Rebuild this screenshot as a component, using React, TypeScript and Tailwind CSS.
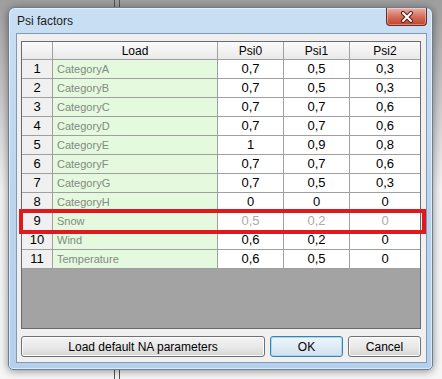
import React from 'react';

type Row = { name: string; v: [string, string, string]; dim?: boolean };

const rows: Row[] = [
  { name: 'CategoryA', v: ['0,7', '0,5', '0,3'] },
  { name: 'CategoryB', v: ['0,7', '0,5', '0,3'] },
  { name: 'CategoryC', v: ['0,7', '0,7', '0,6'] },
  { name: 'CategoryD', v: ['0,7', '0,7', '0,6'] },
  { name: 'CategoryE', v: ['1', '0,9', '0,8'] },
  { name: 'CategoryF', v: ['0,7', '0,7', '0,6'] },
  { name: 'CategoryG', v: ['0,7', '0,5', '0,3'] },
  { name: 'CategoryH', v: ['0', '0', '0'] },
  { name: 'Snow', v: ['0,5', '0,2', '0'], dim: true },
  { name: 'Wind', v: ['0,6', '0,2', '0'] },
  { name: 'Temperature', v: ['0,6', '0,5', '0'] },
];

const headCell =
  'h-[18px] border-r border-b border-[#a0a0a0] bg-gradient-to-b from-[#fbfbfb] to-[#e9e9e9] flex items-center justify-center';

function CloseButton() {
  return (
    <div className="absolute top-0 right-[5px] w-[41px] h-[18px] rounded-b-[4px] border border-t-0 border-[#6e2b22] bg-gradient-to-b from-[#eab1a5] via-[#d2705d] to-[#c2412a] flex items-center justify-center shadow-[inset_0_0_0_1px_rgba(255,255,255,0.35)]">
      <svg width="14" height="12" viewBox="0 0 14 12">
        <path d="M3 2 L11 10 M11 2 L3 10" stroke="#5a1f18" strokeWidth="4" strokeLinecap="round" />
        <path d="M3 2 L11 10 M11 2 L3 10" stroke="#ffffff" strokeWidth="2" strokeLinecap="round" />
      </svg>
    </div>
  );
}

function VistaButton({ label, width, primary }: { label: string; width: string; primary?: boolean }) {
  return (
    <div
      className={`${width} h-[21px] rounded-[3px] border flex items-center justify-center text-[12px] text-black ${
        primary
          ? 'border-[#3c7fb1] bg-gradient-to-b from-[#eef5fa] via-[#e0ecf4] to-[#cfe0ec] shadow-[inset_0_0_0_1px_#a9d8f2]'
          : 'border-[#707070] bg-gradient-to-b from-[#f3f3f3] via-[#e9e9e9] to-[#d6d6d6] shadow-[inset_0_0_0_1px_#fcfcfc]'
      }`}
    >
      {label}
    </div>
  );
}

export default function App() {
  return (
    <div
      className="relative w-[442px] h-[379px] overflow-hidden bg-gradient-to-b from-[#9e9e9e] via-[#f4f4f4] to-[#f6f6f6] pt-[7px] pl-[8px]"
      style={{ fontFamily: '"Liberation Sans", Arial, sans-serif' }}
    >
      {/* window behind the dialog */}
      <div className="absolute left-[114px] top-0 w-[6px] h-[379px] border-x border-[#555]" />

      <div className="relative w-[425px] h-[363px] rounded-t-[7px] rounded-b-[5px] border border-[#6a7f95] bg-gradient-to-b from-[#c9dff4] via-[#bcd5ee] to-[#b4d0ec] shadow-[0_1px_8px_rgba(0,0,0,0.45),inset_0_0_0_1px_rgba(255,255,255,0.55)] flex flex-col">
        <div className="h-[25px] pl-[8px] flex items-center text-[12px] text-[#1c1c1c]">Psi factors</div>
        <CloseButton />

        <div className="ml-[7px] mr-[5px] mb-[6px] flex-1 border border-[#8299b2] bg-[#f0f0f0] pl-[4px] pt-[7px] flex flex-col">
          <div className="relative w-[400px] h-[288px] border border-[#6a6a6a] bg-[#a3a3a3]">
            <div className="grid grid-cols-[31px_165px_66px_66px_70px] text-[12px] bg-white">
              <div className={headCell} />
              <div className={headCell}>Load</div>
              <div className={headCell}>Psi0</div>
              <div className={headCell}>Psi1</div>
              <div className={`${headCell} border-r-0`}>Psi2</div>
              {rows.map((r, i) => (
                <React.Fragment key={r.name}>
                  <div className="h-[19px] border-r border-b border-[#a0a0a0] bg-[#f0f0f0] flex items-center justify-center text-[13px] text-black">
                    {i + 1}
                  </div>
                  <div className="h-[19px] border-r border-b border-[#a0a0a0] bg-[#e4f9de] flex items-center pl-[4px] text-[11px] text-[#828a82]">
                    {r.name}
                  </div>
                  {r.v.map((v, j) => (
                    <div
                      key={j}
                      className={`h-[19px] border-b border-[#a0a0a0] flex items-center justify-center text-[13px] ${
                        j < 2 ? 'border-r' : ''
                      } ${r.dim ? 'text-[#ababab]' : 'text-black'}`}
                    >
                      {v}
                    </div>
                  ))}
                </React.Fragment>
              ))}
            </div>
            <div className="absolute left-[-3px] top-[167px] w-[407px] h-[25px] border-[4px] border-[#e0191f]" />
          </div>

          <div className="mt-[7px] flex gap-[5px] items-center">
            <VistaButton label="Load default NA parameters" width="w-[244px]" />
            <VistaButton label="OK" width="w-[73px]" primary />
            <VistaButton label="Cancel" width="w-[73px]" />
          </div>
        </div>
      </div>
    </div>
  );
}
